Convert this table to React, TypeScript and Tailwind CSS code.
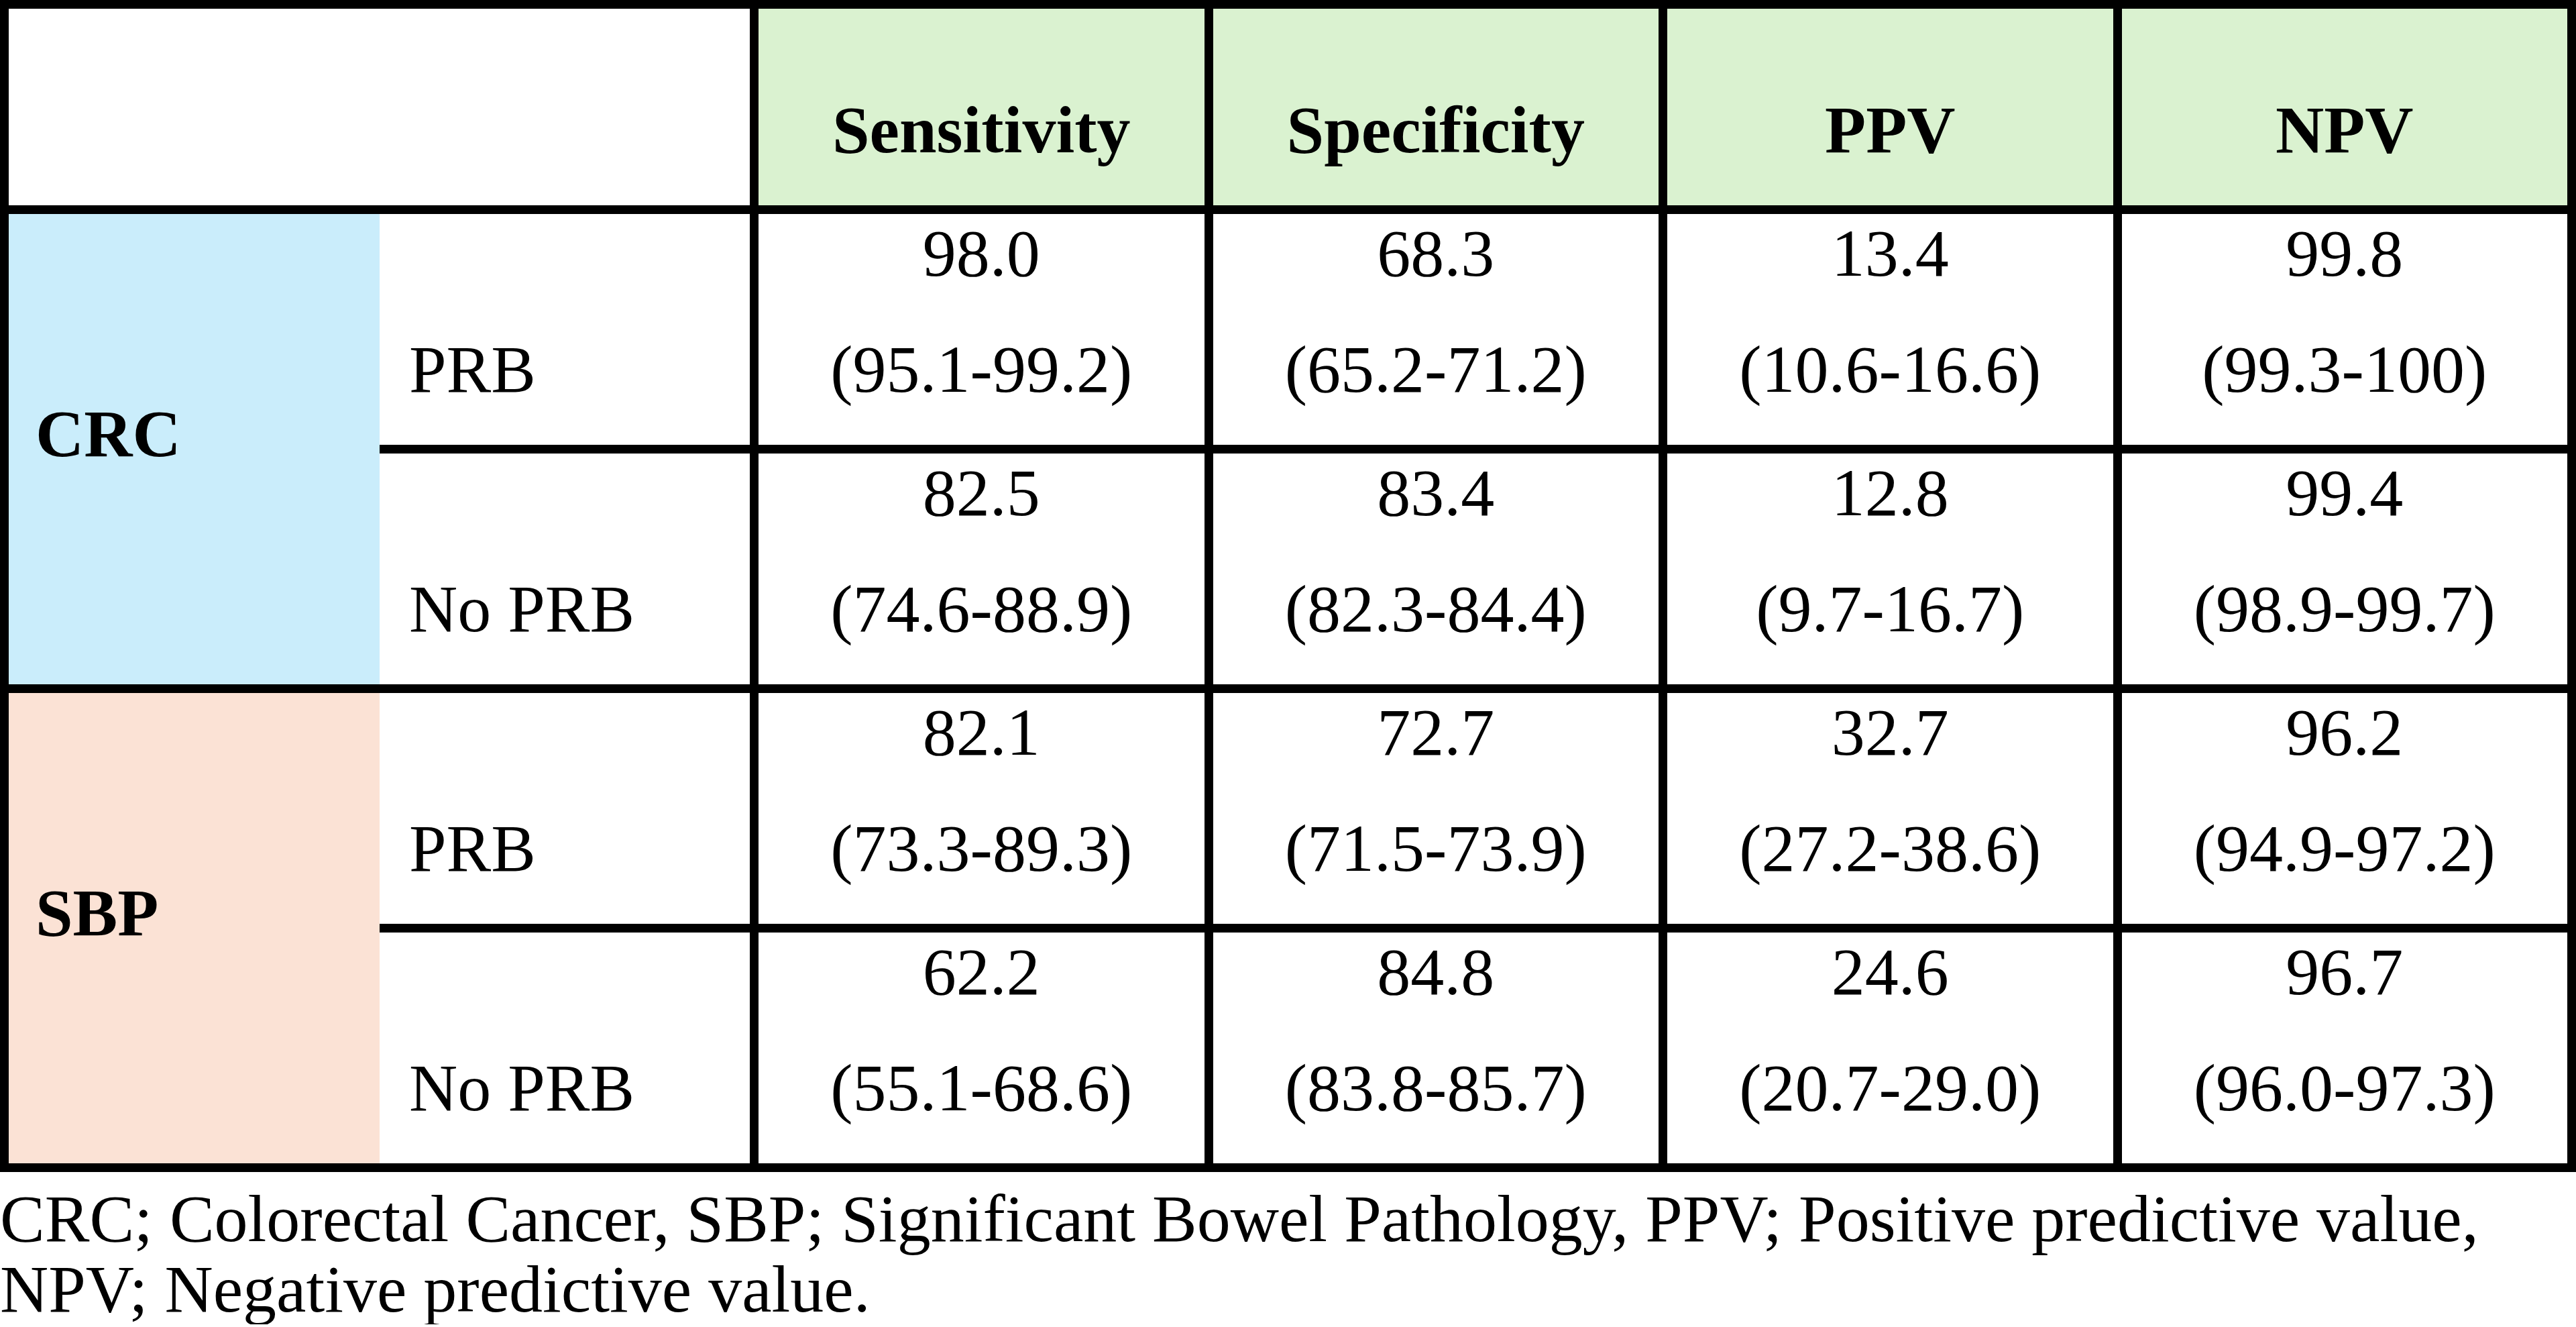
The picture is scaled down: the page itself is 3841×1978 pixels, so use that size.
const groups = [
  {
    label: "CRC",
    color: "bg-[#caedfb]",
    rows: [
      {
        name: "PRB",
        values: [
          ["98.0", "(95.1-99.2)"],
          ["68.3", "(65.2-71.2)"],
          ["13.4", "(10.6-16.6)"],
          ["99.8", "(99.3-100)"],
        ],
      },
      {
        name: "No PRB",
        values: [
          ["82.5", "(74.6-88.9)"],
          ["83.4", "(82.3-84.4)"],
          ["12.8", "(9.7-16.7)"],
          ["99.4", "(98.9-99.7)"],
        ],
      },
    ],
  },
  {
    label: "SBP",
    color: "bg-[#fbe2d5]",
    rows: [
      {
        name: "PRB",
        values: [
          ["82.1", "(73.3-89.3)"],
          ["72.7", "(71.5-73.9)"],
          ["32.7", "(27.2-38.6)"],
          ["96.2", "(94.9-97.2)"],
        ],
      },
      {
        name: "No PRB",
        values: [
          ["62.2", "(55.1-68.6)"],
          ["84.8", "(83.8-85.7)"],
          ["24.6", "(20.7-29.0)"],
          ["96.7", "(96.0-97.3)"],
        ],
      },
    ],
  },
];

const headers = ["Sensitivity", "Specificity", "PPV", "NPV"];

// two stacked lines, second one shares its baseline with the row label
function TwoLines({ top, bottom }: { top: string; bottom: string }) {
  return (
    <div className="flex flex-col gap-[73px] pt-[9px]">
      <div className="h-[100px] leading-[100px] whitespace-pre">{top}</div>
      <div className="h-[100px] leading-[100px] whitespace-pre">{bottom}</div>
    </div>
  );
}

export default function App() {
  return (
    <div className="w-[3841px] bg-white font-['Liberation_Serif','Times_New_Roman',serif] text-[100px] text-black">
      <div className="border-[13px] border-black">
        <div className="flex h-[306px] border-b-[13px] border-black">
          <div className="w-[1105px] shrink-0 bg-white" />
          {headers.map((h) => (
            <div
              key={h}
              className="flex-1 border-l-[13px] border-black bg-[#daf2d0] pt-[131px] text-center font-bold leading-[100px]"
            >
              {h}
            </div>
          ))}
        </div>

        {groups.map((group, gi) => (
          <div
            key={group.label}
            className={
              gi < groups.length - 1
                ? "flex border-b-[13px] border-black"
                : "flex"
            }
          >
            <div
              className={`w-[553px] shrink-0 ${group.color} pt-[278px] pl-[40px] font-bold leading-[100px]`}
            >
              {group.label}
            </div>
            <div className="flex flex-1 flex-col">
              {group.rows.map((row, ri) => (
                <div
                  key={row.name}
                  className={
                    ri === 0
                      ? "flex h-[357px] border-b-[13px] border-black"
                      : "flex h-[344px]"
                  }
                >
                  <div className="w-[552px] shrink-0 pl-[44px]">
                    <TwoLines top=" " bottom={row.name} />
                  </div>
                  {row.values.map(([v, ci], i) => (
                    <div
                      key={i}
                      className="flex-1 border-l-[13px] border-black text-center"
                    >
                      <TwoLines top={v} bottom={ci} />
                    </div>
                  ))}
                </div>
              ))}
            </div>
          </div>
        ))}
      </div>

      <p className="mt-[17px] leading-[105px]">
        CRC; Colorectal Cancer, SBP; Significant Bowel Pathology, PPV; Positive
        predictive value,
        <br />
        NPV; Negative predictive value.
      </p>
    </div>
  );
}
